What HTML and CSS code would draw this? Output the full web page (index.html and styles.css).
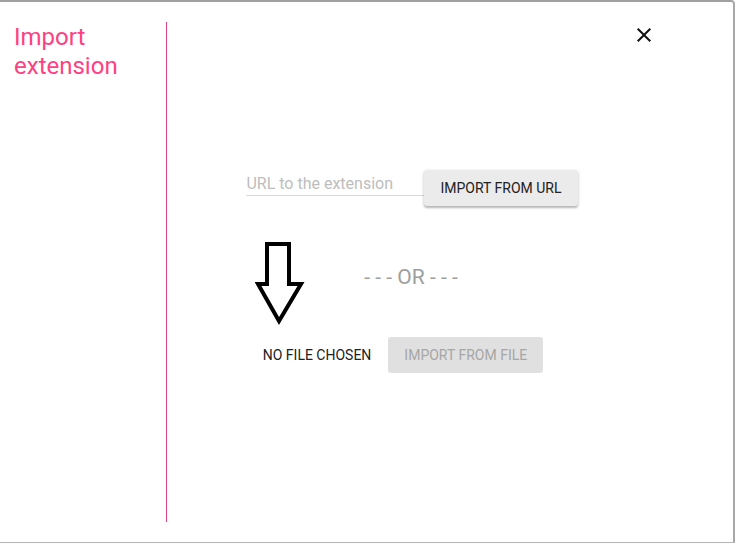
FILE: index.html
```html
<!DOCTYPE html>
<html lang="en">
<head>
<meta charset="utf-8">
<title>Import extension</title>
<link rel="stylesheet" href="styles.css">
</head>
<body>
<div class="dialog">
  <aside class="sidebar">
    <h1 class="title">Import extension</h1>
  </aside>
  <main class="main">
    <section class="content">
      <div class="url-row">
        <input class="url-input" type="text" placeholder="URL to the extension">
        <button class="btn btn-raised" type="button">IMPORT FROM URL</button>
      </div>
      <div class="or">- - - OR - - -</div>
      <div class="file-row">
        <span class="file-name">NO FILE CHOSEN</span>
        <button class="btn btn-disabled" type="button" disabled>IMPORT FROM FILE</button>
      </div>
    </section>
    <div class="close-col">
      <button class="close" type="button" aria-label="Close">
        <svg viewBox="0 0 24 24" width="24" height="24"><path d="M19 6.41L17.59 5 12 10.59 6.41 5 5 6.41 10.59 12 5 17.59 6.41 19 12 13.41 17.59 19 19 17.59 13.41 12z"/></svg>
      </button>
    </div>
  </main>
  <svg class="arrow" viewBox="0 0 52 88" width="52" height="88">
    <polygon points="12,4 34,4 34,44 46,44 24,81 3,44 12,44" fill="none" stroke="#000" stroke-width="4" stroke-linejoin="miter"/>
  </svg>
</div>
<div class="behind"><span class="behind-line"></span></div>
</body>
</html>
```
FILE: styles.css
```css
* { box-sizing: border-box; }
html, body { margin: 0; padding: 0; background: #fff; }
body { font-family: Roboto, "Noto Sans", Arial, sans-serif; color: #212121; }

.dialog {
  position: relative;
  display: flex;
  width: 735px;
  height: 543px;
  background: #fff;
  border-top: 2px solid #a0a0a0;
  border-right: 2px solid #a8a8a8;
  border-bottom: 1px solid #b4b4b4;
  border-top-right-radius: 4px;
  padding: 20px 0 20px 0;
}

.sidebar {
  width: 167px;
  flex: none;
  border-right: 1px solid #e3427d;
  padding-left: 14px;
}

.title {
  margin: 1px 0 0;
  font-size: 24px;
  line-height: 29px;
  font-weight: 400;
  color: #ff4081;
}

.main {
  flex: 1;
  display: flex;
}

.content {
  flex: 1;
  display: flex;
  flex-direction: column;
  align-items: center;
  justify-content: center;
  padding-left: 23px;
  padding-bottom: 2px;
}

.url-row {
  display: flex;
  align-items: flex-start;
  margin-left: 2px;
}

.url-input {
  width: 178px;
  height: 23px;
  margin-top: 3px;
  padding: 0;
  border: none;
  border-bottom: 1px solid #dadada;
  font-family: inherit;
  font-size: 16px;
  color: #212121;
  outline: none;
  background: transparent;
}
.url-input::placeholder { color: #bdbdbd; }

.btn {
  height: 36px;
  padding: 0 16px;
  border: none;
  border-radius: 3px;
  font-family: inherit;
  font-size: 14px;
  font-weight: 400;
  white-space: nowrap;
}
.btn-raised {
  background: #ebebeb;
  color: #212121;
  box-shadow: 0 2px 2px rgba(0,0,0,0.22), 0 1px 4px rgba(0,0,0,0.12);
}
.btn-disabled {
  background: #e0e0e0;
  color: #a6a6a6;
}

.or {
  margin-top: 58px;
  height: 26px;
  line-height: 26px;
  font-size: 21px;
  color: #9e9e9e;
}

.file-row {
  margin-top: 47px;
  margin-right: 16px;
  display: flex;
  align-items: center;
  gap: 17px;
}
.file-name {
  font-size: 14px;
  color: #212121;
}

.close-col {
  width: 101px;
  flex: none;
}
.close {
  display: block;
  margin-top: 1px;
  padding: 0;
  border: none;
  background: none;
  width: 24px;
  height: 24px;
}
.close svg { display: block; fill: #111; }

.arrow {
  position: absolute;
  left: 255px;
  top: 238px;
}

.behind {
  height: 11px;
}
.behind-line {
  display: block;
  margin-left: 57px;
  margin-top: -1px;
  width: 313px;
  height: 1px;
  background: #111;
}
```
